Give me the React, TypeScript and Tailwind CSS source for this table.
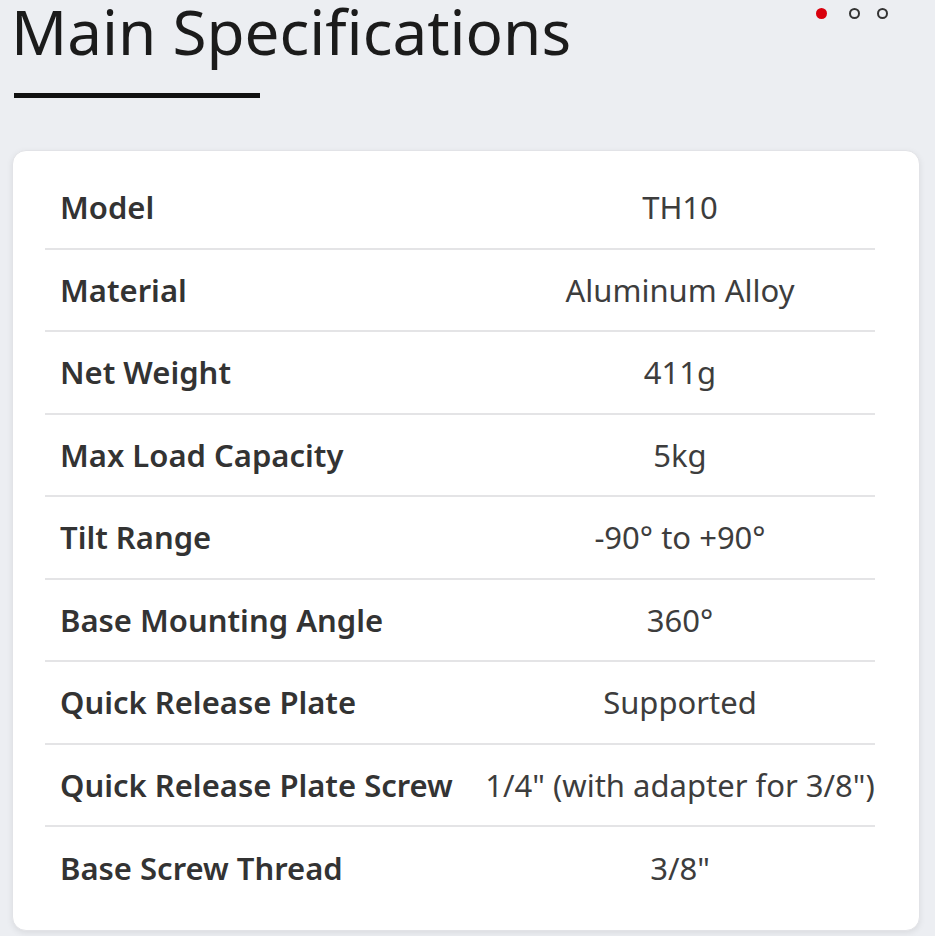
const specs: [string, string][] = [
  ["Model", "TH10"],
  ["Material", "Aluminum Alloy"],
  ["Net Weight", "411g"],
  ["Max Load Capacity", "5kg"],
  ["Tilt Range", "-90° to +90°"],
  ["Base Mounting Angle", "360°"],
  ["Quick Release Plate", "Supported"],
  ["Quick Release Plate Screw", '1/4" (with adapter for 3/8")'],
  ["Base Screw Thread", '3/8"'],
];

export default function App() {
  return (
    <div className="min-h-[936px] bg-[#eceef2] font-['Noto_Sans',sans-serif] overflow-hidden">
      {/* HEADER */}
      <div className="flex items-start justify-between pl-[11px] pr-[47px]">
        <h1 className="text-[62px] leading-[62px] font-normal text-[#1b1b1b]">
          Main Specifications
        </h1>
        <div className="flex items-center mt-[8px]">
          <span className="w-[11px] h-[11px] rounded-full bg-[#d9000d]" />
          <span className="ml-[22px] w-[11px] h-[11px] rounded-full border-2 border-[#333]" />
          <span className="ml-[17px] w-[11px] h-[11px] rounded-full border-2 border-[#333]" />
        </div>
      </div>
      <div className="ml-[14px] mt-[31px] w-[246px] h-[5px] bg-[#111]" />

      {/* SPEC CARD */}
      <div className="mx-[12px] mt-[52px] w-[908px] rounded-[14px] bg-white border border-[#e2e3e7] shadow-[0_2px_6px_rgba(0,0,0,0.08)] pl-[32px] pr-[44px] pt-[16px] pb-[20px]">
        {specs.map(([label, value], i) => (
          <SpecRow key={label} label={label} value={value} last={i === specs.length - 1} />
        ))}
      </div>
    </div>
  );
}

function SpecRow({ label, value, last }: { label: string; value: string; last: boolean }) {
  return (
    <div
      className={
        last
          ? "grid grid-cols-[440px_1fr] items-center h-[82.5px]"
          : "grid grid-cols-[440px_1fr] items-center h-[82.5px] border-b-2 border-[#e4e4e6]"
      }
    >
      <span className="pl-[15px] text-[31px] font-semibold text-[#333] whitespace-nowrap">{label}</span>
      <span className="text-center text-[31px] text-[#3d3d3d] whitespace-nowrap">{value}</span>
    </div>
  );
}
